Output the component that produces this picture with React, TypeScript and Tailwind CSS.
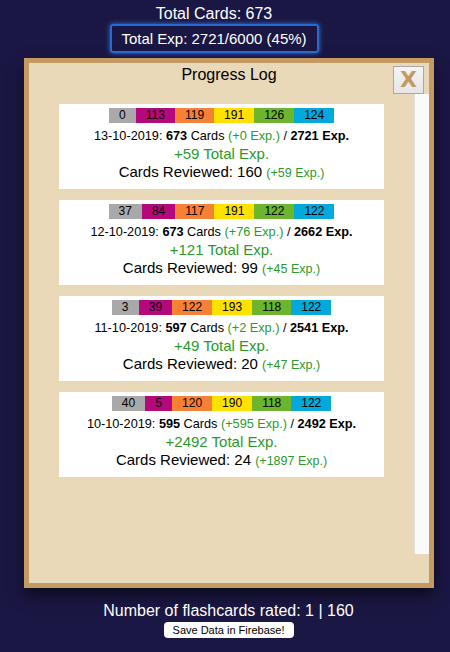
import React from 'react';

type Entry = {
  bar: number[];
  date: string;
  cards: number;
  cardsExp: number;
  totalExp: number;
  gained: number;
  reviewed: number;
  reviewedExp: number;
};

const barColors = ['bg-[#a9a9a9]', 'bg-[#b5087d]', 'bg-[#f68135]', 'bg-[#ffe100]', 'bg-[#6cb52d]', 'bg-[#04a9dc]'];

const entries: Entry[] = [
  { bar: [0, 113, 119, 191, 126, 124], date: '13-10-2019', cards: 673, cardsExp: 0, totalExp: 2721, gained: 59, reviewed: 160, reviewedExp: 59 },
  { bar: [37, 84, 117, 191, 122, 122], date: '12-10-2019', cards: 673, cardsExp: 76, totalExp: 2662, gained: 121, reviewed: 99, reviewedExp: 45 },
  { bar: [3, 39, 122, 193, 118, 122], date: '11-10-2019', cards: 597, cardsExp: 2, totalExp: 2541, gained: 49, reviewed: 20, reviewedExp: 47 },
  { bar: [40, 5, 120, 190, 118, 122], date: '10-10-2019', cards: 595, cardsExp: 595, totalExp: 2492, gained: 2492, reviewed: 24, reviewedExp: 1897 },
];

const LogCard = ({ entry }: { entry: Entry }) => (
  <div className="bg-white h-[85px] pt-[4px] flex flex-col items-center text-black">
    {/* level distribution bar */}
    <div className="flex h-[15px] text-[12px] leading-[15px]">
      {entry.bar.map((n, i) => (
        <span key={i} className={`${barColors[i]} px-[10px] min-w-[27px] text-center`}>
          {n}
        </span>
      ))}
    </div>
    <div className="mt-[4px] h-[18px] leading-[18px] text-[12.7px]">
      {entry.date}: <b>{entry.cards}</b> Cards <span className="text-[#2b9a2b]">(+{entry.cardsExp} Exp.)</span> /{' '}
      <b>{entry.totalExp} Exp.</b>
    </div>
    <div className="h-[17px] leading-[17px] text-[15px] text-[#2b9a2b]">+{entry.gained} Total Exp.</div>
    <div className="h-[19px] leading-[19px] text-[15px]">
      Cards Reviewed: {entry.reviewed}{' '}
      <span className="text-[12.5px] text-[#2b9a2b]">(+{entry.reviewedExp} Exp.)</span>
    </div>
  </div>
);

export default function App() {
  return (
    <div className="min-h-[652px] w-[450px] bg-[#1b1744] text-white font-['Liberation_Sans',Arial,sans-serif] pt-[5px]">
      <div className="w-[428px]">
        <div className="text-center text-[16px] leading-[18px]">Total Cards: 673</div>
        <div className="flex justify-center mt-[1px]">
          <div className="border-2 border-[#2a6ad0] rounded-[3px] shadow-[0_0_5px_#2f7de0] h-[29px] leading-[25px] text-[15px] w-[209px] text-center">
            Total Exp: 2721/6000 (45%)
          </div>
        </div>
      </div>

      {/* modal */}
      <div className="ml-[24px] mt-[5px] w-[410px] h-[530px] border-[5px] border-[#c29a62] bg-[#e9d9b9] shadow-[0_8px_14px_rgba(0,0,0,0.55)] text-black flex flex-col">
        <div className="relative h-[31px]">
          <div className="text-center text-[16px] leading-[18px] pt-[3px]">Progress Log</div>
          <button className="absolute right-[5px] top-[3px] w-[31px] h-[28px] border border-[#a8a8a8] bg-gradient-to-b from-[#f4f4f4] to-[#e6e6e6] text-[#c49a62] font-bold text-[22px] leading-[26px] font-['DejaVu_Sans',sans-serif]">
            X
          </button>
        </div>
        <div className="flex h-[460px]">
          <div className="flex-1 px-[30px] pt-[10px] flex flex-col gap-[11px]">
            {entries.map((e) => (
              <LogCard key={e.date} entry={e} />
            ))}
          </div>
          <div className="w-[15px] bg-[#fafafa] border-l border-[#e2e2e2]" />
        </div>
      </div>

      <div className="pl-[7px]">
        <div className="text-center text-[16px] leading-[18px] mt-[14px]">Number of flashcards rated: 1 | 160</div>
        <div className="flex justify-center mt-[2px]">
          <button className="bg-white text-black rounded-[4px] text-[11px] leading-[16px] h-[16px] w-[130px]">
            Save Data in Firebase!
          </button>
        </div>
      </div>
    </div>
  );
}
